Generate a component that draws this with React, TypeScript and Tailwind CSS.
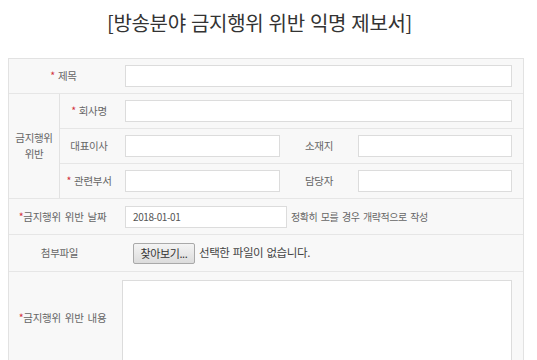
const Star = () => <span className="mr-[3px] text-[#d2333a]">*</span>

const Input = ({ w }: { w?: string }) => (
  <div className={'h-[22px] border border-[#dcdcdc] bg-white ' + (w ?? 'flex-1')} />
)

const App = () => {
  return (
    <div className="h-[360px] w-[537px] overflow-hidden bg-white font-['Noto_Sans_CJK_KR','Noto_Sans',sans-serif] text-[#666]">
      <div className="flex h-[58px] items-center justify-center pb-[12px] pr-[18px]">
        <span className="text-[20px] font-normal tracking-[-0.3px] text-[#333] [word-spacing:1px]">
          [방송분야 금지행위 위반 익명 제보서]
        </span>
      </div>

      <div className="ml-2 w-[516px] border border-[#e2e2e2] bg-[#f8f8f8] text-[10.5px] tracking-[-0.3px] [word-spacing:2px]">
        {/* 제목 */}
        <div className="flex h-[35px] border-b border-[#e6e6e6]">
          <div className="flex w-[109px] items-center justify-center">
            <Star />
            제목
          </div>
          <div className="flex flex-1 items-center pl-[7px] pr-[11px]">
            <Input />
          </div>
        </div>

        {/* 금지행위 위반 group */}
        <div className="flex border-b border-[#e6e6e6]">
          <div className="flex w-[51px] flex-col items-center justify-center border-r border-[#e2e2e2] leading-[16px]">
            <span>금지행위</span>
            <span>위반</span>
          </div>
          <div className="flex flex-1 flex-col">
            <div className="flex h-[35px] border-b border-[#e6e6e6]">
              <div className="flex w-[58px] items-center justify-center">
                <Star />
                회사명
              </div>
              <div className="flex flex-1 items-center pl-[7px] pr-[11px]">
                <Input />
              </div>
            </div>
            <div className="flex h-[35px] border-b border-[#e6e6e6]">
              <div className="flex w-[58px] items-center justify-center">대표이사</div>
              <div className="flex flex-1 items-center pl-[7px] pr-[11px]">
                <Input w="w-[155px]" />
                <div className="flex w-[78px] items-center justify-center">소재지</div>
                <Input />
              </div>
            </div>
            <div className="flex h-[34px]">
              <div className="flex w-[58px] items-center justify-center">
                <Star />
                관련부서
              </div>
              <div className="flex flex-1 items-center pl-[7px] pr-[11px]">
                <Input w="w-[155px]" />
                <div className="flex w-[78px] items-center justify-center">담당자</div>
                <Input />
              </div>
            </div>
          </div>
        </div>

        {/* 날짜 */}
        <div className="flex h-[36px] border-b border-[#e6e6e6]">
          <div className="flex w-[109px] items-center justify-center pr-[2px]">
            <span className="text-[#d2333a]">*</span>
            금지행위 위반 날짜
          </div>
          <div className="flex flex-1 items-center pl-[7px]">
            <div className="flex h-[22px] w-[162px] items-center border border-[#dcdcdc] bg-white pl-[7px] text-[10px] tracking-[-0.4px] text-[#555]">
              2018-01-01
            </div>
            <span className="ml-[4px] text-[10px] tracking-[-0.5px]">정확히 모를 경우 개략적으로 작성</span>
          </div>
        </div>

        {/* 첨부파일 */}
        <div className="flex h-[37px] border-b border-[#e6e6e6]">
          <div className="flex w-[109px] items-center justify-center pr-[8px]">첨부파일</div>
          <div className="flex flex-1 items-center pl-[15px]">
            <div className="flex h-[21px] w-[62px] items-center justify-center rounded-[2px] border border-[#a9a9a9] bg-gradient-to-b from-[#f4f4f4] to-[#dcdcdc] text-[11px] tracking-[-0.4px] text-[#333] [word-spacing:0px]">
              찾아보기...
            </div>
            <span className="ml-[4px] text-[11.5px] tracking-[-0.4px] text-[#444] [word-spacing:1px]">선택한 파일이 없습니다.</span>
          </div>
        </div>

        {/* 내용 */}
        <div className="flex h-[120px]">
          <div className="flex w-[109px] items-center justify-center pb-[28px] pr-[2px]">
            <span className="text-[#d2333a]">*</span>
            금지행위 위반 내용
          </div>
          <div className="flex-1 pl-[4px] pr-[11px] pt-[8px]">
            <div className="h-[110px] border border-[#dcdcdc] bg-white" />
          </div>
        </div>
      </div>
    </div>
  )
}

export default App
